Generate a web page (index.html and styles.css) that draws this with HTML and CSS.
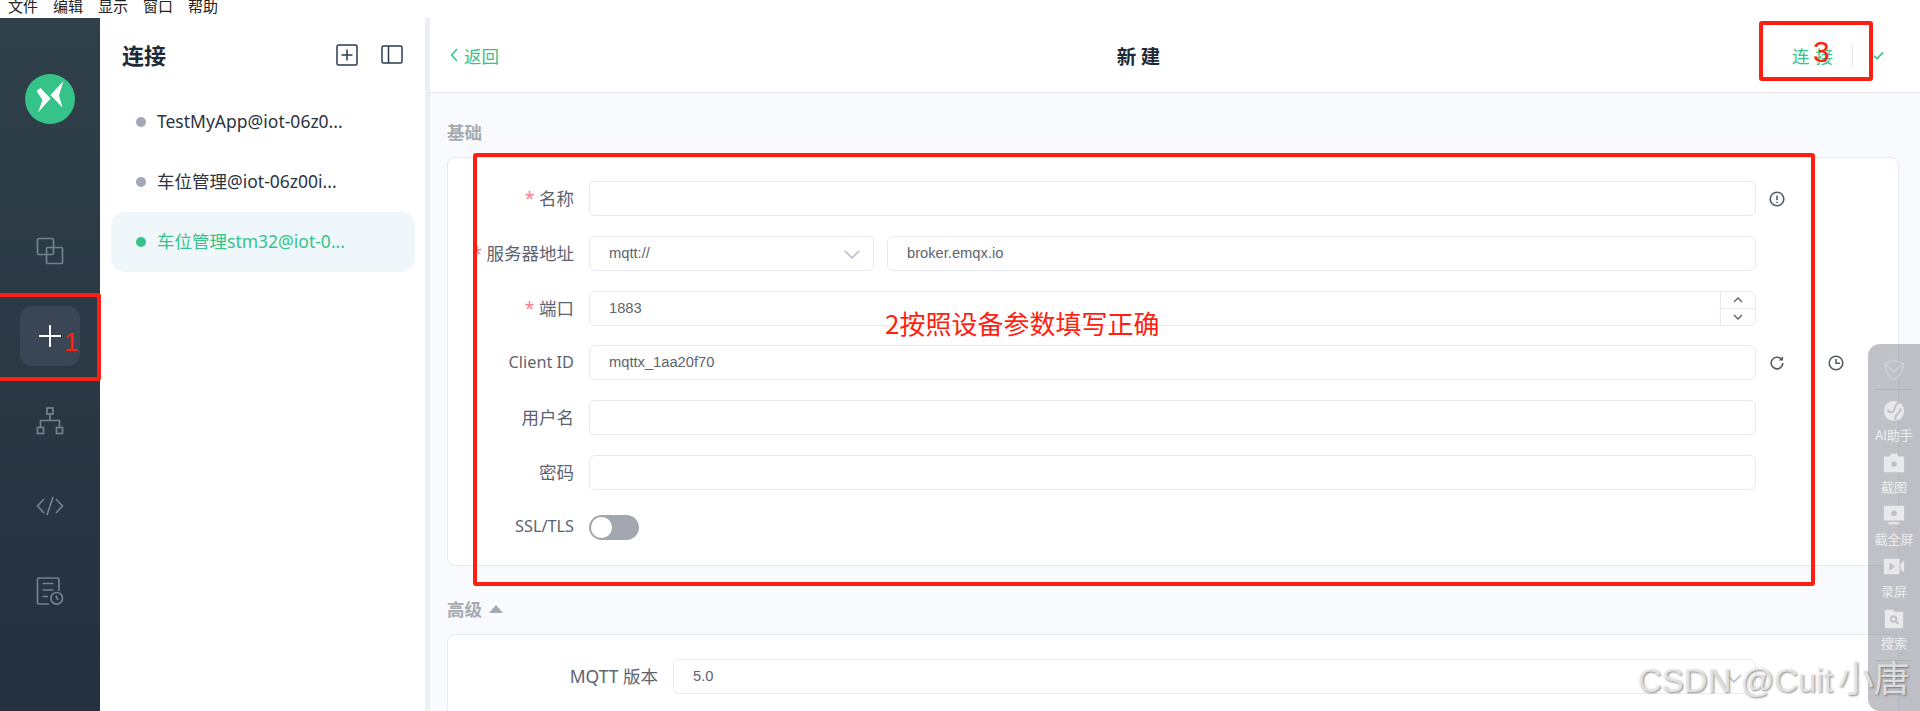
FILE: index.html
```html
<!DOCTYPE html>
<html lang="zh">
<head>
<meta charset="utf-8">
<title>MQTTX</title>
<link rel="stylesheet" href="styles.css">
</head>
<body>
<nav class="menubar"><span>文件</span><span>编辑</span><span>显示</span><span>窗口</span><span>帮助</span></nav>
<div class="app">
  <aside class="rail">
    <svg class="logo" viewBox="0 0 50 50"><circle cx="25" cy="25" r="25" fill="#35c38a"/><path d="M11.500 17l4-3 10 10.500L13 38.500l4.500-12.500zM38.500 7l-13 14 12 12.500-3.500-12z" fill="#fff"/></svg>
    <div class="rail-btn first"><svg viewBox="0 0 28 28" class="rail-ico"><rect x="1.500" y="1.500" width="16" height="16" rx="1.500"/><rect x="10.500" y="10.500" width="16" height="16" rx="1"/></svg></div>
    <div class="rail-btn active"><svg viewBox="0 0 28 28" class="rail-ico plus"><path d="M14 3v22M3 14h22"/></svg></div>
    <div class="rail-btn"><svg viewBox="0 0 28 28" class="rail-ico"><rect x="11" y="1" width="6" height="6"/><rect x="1.500" y="20.500" width="6" height="6"/><rect x="20.500" y="20.500" width="6" height="6"/><path d="M14 7v6.500M4.500 20.500v-7h19v7"/></svg></div>
    <div class="rail-btn"><svg viewBox="0 0 28 28" class="rail-ico"><path d="M8 7L1.500 14 8 21M20 7l6.500 7-6.500 7M17 5l-6 18"/></svg></div>
    <div class="rail-btn"><svg viewBox="0 0 28 28" class="rail-ico"><path d="M13 27H3a1.500 1.500 0 0 1-1.500-1.500V2.500A1.500 1.500 0 0 1 3 1h18.500a1.500 1.500 0 0 1 1.500 1.500V14M6.500 6.500h11M6.500 13h11M6.500 19.500h5.500"/><circle cx="20.700" cy="21.300" r="5.800"/><path d="M20 18.500l1 3 1.500 1.500"/></svg></div>
  </aside>
  <section class="list">
    <header class="list-head">
      <h1>连接</h1>
      <div class="list-tools">
        <svg viewBox="0 0 22 22" class="tool"><rect x="1" y="1" width="20" height="20" rx="1.500"/><path d="M11 5.500v11M5.500 11h11"/></svg>
        <svg viewBox="0 0 22 20" class="tool wide"><rect x="1" y="1" width="20" height="17" rx="1.500"/><path d="M7.500 1v17"/></svg>
      </div>
    </header>
    <ul class="conns">
      <li class="conn"><i class="dot"></i><span>TestMyApp@iot-06z0...</span></li>
      <li class="conn"><i class="dot"></i><span>车位管理@iot-06z00i...</span></li>
      <li class="conn on"><i class="dot"></i><span>车位管理stm32@iot-0...</span></li>
    </ul>
  </section>
  <main class="main">
    <header class="top">
      <a class="back"><svg viewBox="0 0 8 14" class="chev"><path d="M7 1L1.500 7 7 13"/></svg>返回</a>
      <h2>新 建</h2>
      <div class="actions"><span class="go">连 接</span><i class="sep"></i><svg viewBox="0 0 12 10" class="check"><path d="M1 5.500l3.500 3L11 1.500"/></svg></div>
    </header>
    <div class="body">
      <h3 class="sect">基础</h3>
      <div class="card">
        <div class="row"><label class="lab"><em>*</em> 名称</label><div class="field"></div><svg viewBox="0 0 16 16" class="ico"><circle cx="8" cy="8" r="6.800"/><path d="M8 4.500v4.500M8 10.800v1.200"/></svg></div>
        <div class="row"><label class="lab"><em>*</em> 服务器地址</label><div class="split"><div class="field sel">mqtt://<svg viewBox="0 0 16 9" class="down"><path d="M1 1l7 7 7-7"/></svg></div><div class="field">broker.emqx.io</div></div></div>
        <div class="row"><label class="lab"><em>*</em> 端口</label><div class="field num">1883<div class="spin"><span><svg viewBox="0 0 10 6" class="sp"><path d="M1 5l4-4 4 4"/></svg></span><span><svg viewBox="0 0 10 6" class="sp"><path d="M1 1l4 4 4-4"/></svg></span></div></div></div>
        <div class="row"><label class="lab latin">Client ID</label><div class="field">mqttx_1aa20f70</div><svg viewBox="0 0 16 16" class="ico"><path d="M13.800 8a5.800 5.800 0 1 1-1.700-4.100"/><path d="M14 1.300v4.200H9.800z" class="fillp"/></svg><svg viewBox="0 0 16 16" class="ico far"><circle cx="8" cy="8" r="6.800"/><path d="M8 4v4.300h4"/></svg></div>
        <div class="row"><label class="lab">用户名</label><div class="field"></div></div>
        <div class="row"><label class="lab">密码</label><div class="field"></div></div>
        <div class="row"><label class="lab latin">SSL/TLS</label><div class="switch"><i></i></div></div>
      </div>
      <h3 class="sect adv">高级<span class="tri"></span></h3>
      <div class="card second">
        <div class="row"><label class="lab">MQTT 版本</label><div class="field sel">5.0<svg viewBox="0 0 16 9" class="down"><path d="M1 1l7 7 7-7"/></svg></div></div>
      </div>
    </div>
  </main>
</div>

<div class="mark m1"></div>
<div class="mark m2"></div>
<div class="mark m3"></div>
<span class="note n1">1</span>
<span class="note n2">2按照设备参数填写正确</span>
<span class="note n3">3</span>

<aside class="float">
  <svg viewBox="0 0 24 24" class="f-ico shield"><path d="M12 1.500l10 3.500c0 9-3 14-10 17.500C5 19 2 14 2 5z M3 6l9 8 9-8" /></svg>
  <i class="f-line"></i>
  <svg viewBox="0 0 24 24" class="f-ico solid"><circle cx="12" cy="12" r="11"/><path d="M18 3c-7 1-3 8-8 10-2 1-4 0-5-3M19 9c1 4-2 5-4 7-2 2-2 4-1 6" fill="none" stroke="#bfc0c5" stroke-width="2"/></svg>
  <span>AI助手</span>
  <svg viewBox="0 0 24 24" class="f-ico solid"><path d="M1 5h6l2-3h6l2 3h6v17H1z"/><circle cx="12" cy="13" r="3" fill="#bfc0c5"/></svg>
  <span>截图</span>
  <svg viewBox="0 0 24 24" class="f-ico solid"><path d="M1 2h22v16H1zM6 20h12v2H6z"/><circle cx="12" cy="10" r="3" fill="#bfc0c5"/></svg>
  <span>截全屏</span>
  <svg viewBox="0 0 24 24" class="f-ico solid"><path d="M1 3h17v17H1zM19 9l4-4v13l-4-4z"/><path d="M7 7l6 4.500-6 4.500z" fill="#bfc0c5"/></svg>
  <span>录屏</span>
  <svg viewBox="0 0 24 24" class="f-ico solid"><path d="M2 2h9l2 2h9v18H2z"/><circle cx="11.500" cy="12" r="3" fill="none" stroke="#bfc0c5" stroke-width="2"/><path d="M14 14.500l3 3" stroke="#bfc0c5" stroke-width="2"/></svg>
  <span>搜索</span>
  <i class="f-line low"></i>
</aside>
<div class="wm">CSDN @Cuit<b>小唐</b></div>
</body>
</html>
```
FILE: styles.css
```css
* { box-sizing: border-box; }
html, body { margin: 0; height: 711px; overflow: hidden; }
body { font-family: "Noto Sans", "Noto Sans CJK SC", sans-serif; background: #fff; color: #2b3440; position: relative; }
h1, h2, h3, ul { margin: 0; padding: 0; }
em { font-style: normal; }

.menubar { height: 18px; display: flex; gap: 15px; padding-left: 8px; overflow: hidden; font-size: 15px; line-height: 15px; color: #222; font-family: "Noto Sans CJK SC", sans-serif; background: #fff; }
.menubar span { margin-top: -2px; }

.app { display: flex; height: 693px; }
.rail { width: 100px; flex: none; display: flex; flex-direction: column; align-items: center; background: linear-gradient(#2f404a, #25313f); padding-top: 56px; }
.logo { width: 50px; height: 50px; display: block; flex: none; }
.rail-btn { width: 60px; height: 60px; margin-top: 25px; flex: none; display: flex; align-items: center; justify-content: center; border-radius: 12px; }
.rail-btn.first { margin-top: 97px; }
.rail-btn.active { background: #3a4655; }
.rail-ico { width: 28px; height: 28px; fill: none; stroke: #71838d; stroke-width: 1.700; }
.rail-ico.plus { stroke: #fff; stroke-width: 2; }

.list { width: 330px; flex: none; background: #fff; border-right: 5px solid #eceef5; }
.list-head { height: 74px; padding: 0 22px; display: flex; align-items: center; justify-content: space-between; }
.list-head h1 { font-size: 22px; line-height: 30px; margin-top: -3px; font-weight: 700; color: #1f2a36; font-family: "Noto Sans CJK SC", sans-serif; }
.list-tools { display: flex; gap: 23px; align-items: center; }
.tool { width: 22px; height: 22px; fill: none; stroke: #2d3a4c; stroke-width: 1.500; display: block; }
.tool.wide { height: 20px; }
.conns { list-style: none; padding: 0 10px 0 11px; }
.conn { height: 60px; padding-left: 25px; display: flex; align-items: center; font-size: 17.500px; color: #2b3440; white-space: nowrap; }
.conn span { margin-top: -3px; }
.dot { width: 10px; height: 10px; border-radius: 50%; background: #a3a8b8; margin-right: 11px; flex: none; }
.conn.on { background: #f0f7fa; border-radius: 14px; color: #35c38a; }
.conn.on .dot { background: #35c38a; }

.main { flex: 1; min-width: 0; background: #f9fafd; }
.top { height: 75px; background: #fff; border-bottom: 1px solid #e4e6ee; padding-left: 20px; display: flex; justify-content: space-between; align-items: center; }
.back { display: flex; align-items: center; gap: 6px; font-size: 17.500px; color: #35c38a; font-family: "Noto Sans CJK SC", sans-serif; }
.chev { width: 8px; height: 14px; fill: none; stroke: #35c38a; stroke-width: 1.500; }
.top h2 { font-size: 19.500px; font-weight: 700; color: #1f2a36; white-space: pre; font-family: "Noto Sans CJK SC", sans-serif; }
.actions { display: flex; align-items: center; padding: 0 36px 0 14px; }
.go { font-size: 17.500px; color: #35c38a; white-space: pre; word-spacing: 2px; font-family: "Noto Sans CJK SC", sans-serif; }
.sep { width: 1px; height: 23px; background: #e4e6ee; margin: 0 20px 0 19px; }
.check { width: 11px; height: 9px; fill: none; stroke: #35c38a; stroke-width: 1.800; }

.body { padding: 27px 21px 0 17px; }
.sect { font-size: 17.500px; line-height: 24px; font-weight: 700; color: #a6abb3; font-family: "Noto Sans CJK SC", sans-serif; display: flex; align-items: center; }
.adv { margin-top: 31px; }
.tri { width: 0; height: 0; border: 7px solid transparent; border-top: 0; border-bottom: 8px solid #a6abb3; margin-left: 7px; }
.card { margin-top: 13px; height: 409px; background: #fff; border: 1px solid #e8eaf1; border-radius: 8px; padding: 23px 0 0; display: flex; flex-direction: column; gap: 19.800px; }
.card.second { height: 90px; margin-top: 13px; padding-top: 24px; border-radius: 8px 8px 0 0; }
.second .lab { width: 210px; }
.second .field { width: 1083px; }

.row { height: 35px; flex: none; display: flex; align-items: center; }
.lab { width: 126px; margin-right: 15px; margin-top: -2px; flex: none; text-align: right; font-size: 17.500px; color: #5d6470; white-space: nowrap; font-family: "Noto Sans", "Noto Sans CJK SC", sans-serif; }
.lab.latin { font-size: 16.300px; }
.lab em { color: #fb7a8c; }
.field { width: 1167px; height: 35px; flex: none; border: 1px solid #e8eaf3; border-radius: 6px; background: #fff; padding-left: 19px; font-size: 14.700px; line-height: 33px; color: #5d6470; font-family: "Liberation Sans", sans-serif; }
.split { width: 1167px; flex: none; display: flex; gap: 13px; }
.split .field { flex: 1; width: auto; }
.split .sel { flex: none; width: 285px; }
.sel { display: flex; align-items: center; justify-content: space-between; padding-right: 13px; }
.down { width: 16px; height: 9px; fill: none; stroke: #c2c6d0; stroke-width: 1.800; margin-top: 3px; }
.num { display: flex; justify-content: space-between; padding-right: 0; overflow: hidden; }
.spin { width: 35px; display: flex; flex-direction: column; border-left: 1px solid #e8eaf3; }
.spin span { flex: 1; display: flex; align-items: center; justify-content: center; }
.spin span + span { border-top: 1px solid #e8eaf3; }
.sp { width: 10px; height: 6px; fill: none; stroke: #5d6470; stroke-width: 1.300; display: block; }
.ico { width: 16px; height: 16px; margin-left: 13px; flex: none; fill: none; stroke: #555c66; stroke-width: 1.600; }
.ico.far { margin-left: 43px; }
.fillp { fill: #555c66; stroke: none; }
.switch { width: 50px; height: 25px; border-radius: 13px; background: #a3a8b0; padding: 2px; }
.switch i { display: block; width: 21px; height: 21px; border-radius: 50%; background: #fff; }

.mark { position: absolute; border: 4px solid #ff1f12; border-radius: 3px; }
.m1 { left: -4px; top: 293px; width: 105px; height: 88px; }
.m2 { left: 473px; top: 153px; width: 1342px; height: 433px; }
.m3 { left: 1759px; top: 21px; width: 114px; height: 60px; }
.note { position: absolute; color: #ff1f12; font-family: "Noto Sans CJK SC", sans-serif; white-space: nowrap; }
.n1 { left: 64px; top: 324px; font-size: 26px; line-height: 36px; font-family: "Liberation Sans", sans-serif; }
.n2 { left: 885px; top: 305px; font-size: 26px; line-height: 36px; }
.n3 { left: 1813px; top: 34px; font-size: 30px; line-height: 36px; font-family: "Liberation Sans", sans-serif; }

.float { position: absolute; left: 1868px; top: 344px; width: 52px; height: 367px; border-radius: 12px 0 0 12px; background: rgba(125, 127, 137, 0.48); display: flex; flex-direction: column; align-items: center; padding-top: 15px; color: #eceded; font-size: 13px; line-height: 17px; font-family: "Noto Sans CJK SC", sans-serif; }
.float span { margin-bottom: 9px; margin-top: -1px; white-space: nowrap; }
.f-ico { width: 22px; height: 22px; display: block; margin-bottom: 5px; flex: none; }
.f-ico.solid { fill: #e9e9eb; }
.f-ico.shield { fill: none; stroke: #cfd0d4; stroke-width: 1.600; margin-bottom: 0; }
.f-line { width: 38px; height: 1px; background: #b0b1b6; margin: 8px 0 10px; flex: none; }
.f-line.low { margin-top: 0; }
.wm { position: absolute; left: 1638px; top: 658px; font-size: 33px; line-height: 44px; color: rgba(235, 235, 235, 0.85); text-shadow: 1px 1px 2px rgba(90, 90, 90, 0.7); white-space: nowrap; font-family: "Liberation Sans", "Noto Sans CJK SC", sans-serif; }
.wm b { font-size: 36px; font-weight: 400; margin-left: 5px; }
```
